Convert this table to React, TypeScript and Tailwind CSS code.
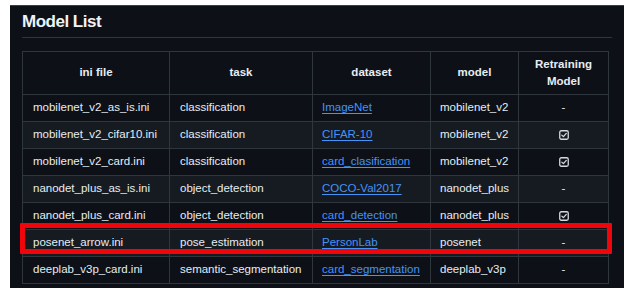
const rows = [
  { ini: "mobilenet_v2_as_is.ini", task: "classification", dataset: "ImageNet", model: "mobilenet_v2", retrain: false },
  { ini: "mobilenet_v2_cifar10.ini", task: "classification", dataset: "CIFAR-10", model: "mobilenet_v2", retrain: true },
  { ini: "mobilenet_v2_card.ini", task: "classification", dataset: "card_clasification", model: "mobilenet_v2", retrain: true },
  { ini: "nanodet_plus_as_is.ini", task: "object_detection", dataset: "COCO-Val2017", model: "nanodet_plus", retrain: false },
  { ini: "nanodet_plus_card.ini", task: "object_detection", dataset: "card_detection", model: "nanodet_plus", retrain: true },
  { ini: "posenet_arrow.ini", task: "pose_estimation", dataset: "PersonLab", model: "posenet", retrain: false },
  { ini: "deeplab_v3p_card.ini", task: "semantic_segmentation", dataset: "card_segmentation", model: "deeplab_v3p", retrain: false },
];

const CheckBox = () => (
  <svg width="10" height="10" viewBox="0 0 10 10" className="inline-block">
    <rect x="0.75" y="0.75" width="8.5" height="8.5" rx="1.5" fill="none" stroke="#d6dbe0" strokeWidth="1.3" />
    <path d="M2.8 5.1 L4.4 6.6 L7.3 3.4" fill="none" stroke="#d6dbe0" strokeWidth="1.3" strokeLinecap="round" strokeLinejoin="round" />
  </svg>
);

export default function App() {
  return (
    <div className="h-[290px] w-[630px] bg-white pt-[5px] pl-[10px]" style={{ fontFamily: '"Liberation Sans", Arial, sans-serif' }}>
      <div className="relative h-[283px] w-[614px] border-t border-[#3a3f45] bg-[#0d1117] px-[12px] pt-[4px]">
        <h2 className="border-b border-[#30363d] pb-[4px] text-[17px] leading-[23px] font-bold tracking-[-0.5px] text-[#f0f3f6]">
          Model List
        </h2>

        <table className="mt-[13px] w-[586px] table-fixed border-collapse text-[11.5px] text-[#e6edf3]">
          <colgroup>
            <col className="w-[147px]" />
            <col className="w-[143px]" />
            <col className="w-[118px]" />
            <col className="w-[88px]" />
            <col className="w-[90px]" />
          </colgroup>
          <thead>
            <tr className="h-[43px]">
              {["ini file", "task", "dataset", "model"].map((h) => (
                <th key={h} className="border border-[#30363d] text-center font-bold">
                  {h}
                </th>
              ))}
              <th className="border border-[#30363d] px-2 text-center leading-[17px] font-bold">
                Retraining
                <br />
                Model
              </th>
            </tr>
          </thead>
          <tbody>
            {rows.map((r, i) => (
              <tr key={r.ini} className={`h-[27px] ${i % 2 === 1 ? "bg-[#161b22]" : "bg-[#0d1117]"}`}>
                <td className="border border-[#30363d] pl-[10px]">{r.ini}</td>
                <td className="border border-[#30363d] pl-[10px]">{r.task}</td>
                <td className="border border-[#30363d] pl-[9px]">
                  <a className="text-[#4493f8] underline underline-offset-2">{r.dataset}</a>
                </td>
                <td className="border border-[#30363d] pl-[9px]">{r.model}</td>
                <td className="border border-[#30363d] text-center">
                  {r.retrain ? <CheckBox /> : <span>-</span>}
                </td>
              </tr>
            ))}
          </tbody>
        </table>

        <div className="pointer-events-none absolute top-[217px] left-[10px] h-[31px] w-[592px] rounded-[1px] border-[5px] border-[#f0060a]" />
      </div>
    </div>
  );
}
